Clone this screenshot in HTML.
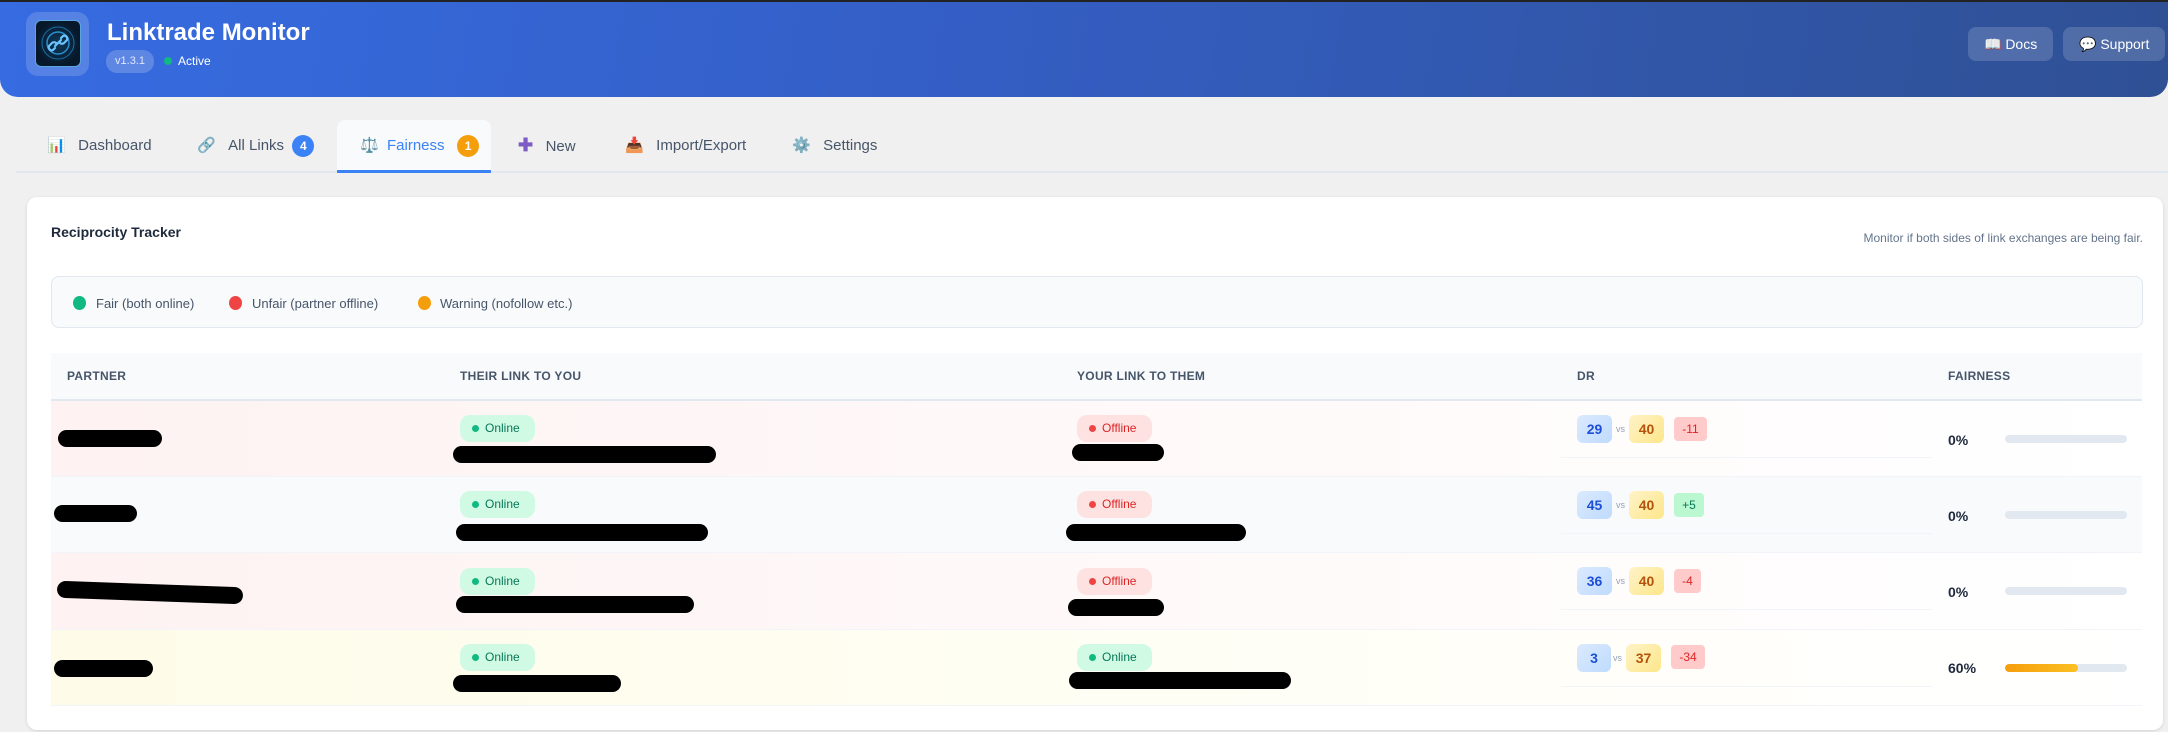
<!DOCTYPE html>
<html><head><meta charset="utf-8"><style>
*{box-sizing:border-box;margin:0;padding:0}
body{width:2168px;height:732px;background:#f0f0f0;font-family:"Liberation Sans",sans-serif;position:relative;overflow:hidden}
.a{position:absolute}
.hdr{left:0;top:0;width:2168px;height:97px;border-radius:0 0 18px 18px;border-top:2px solid #222;
background-image:linear-gradient(100deg,#2660e0 0%,#2452c0 45%,#1f438c 100%)}
.pat{left:0;top:2px;width:2168px;height:95px;border-radius:0 0 18px 18px;opacity:.07;
background-image:linear-gradient(#fff,#fff),linear-gradient(#fff,#fff);background-size:8px 1.5px,1.5px 8px;background-position:10px 14px,13.25px 10.75px;background-repeat:repeat}
.btn{top:27px;height:34px;border-radius:8px;background:rgba(255,255,255,.16);color:#fff;font-size:14px;line-height:34px;padding-left:16px}
.tab{top:146px;font-size:15px;color:#475569;transform:translateY(-50%);line-height:22px}
.badge{display:inline-block;width:22px;height:22px;border-radius:11px;color:#fff;font-size:12px;font-weight:bold;text-align:center;line-height:22px;vertical-align:middle}
.th{top:376px;font-size:12px;font-weight:bold;color:#475569;transform:translateY(-50%);letter-spacing:.3px}
.pill{height:27px;border-radius:10px;font-size:12px;line-height:27px;padding-left:25px;width:75px}
.pill:before{content:"";position:absolute;left:12px;top:10px;width:7px;height:7px;border-radius:50%}
.on{background:#d1fae5;color:#047857}.on:before{background:#10b981}
.off{background:#fee2e2;color:#dc2626}.off:before{background:#ef4444}
.blk{background:#000;border-radius:9px;height:17px}
.dr{width:35px;height:28px;border-radius:6px;font-size:14px;font-weight:bold;text-align:center;line-height:28px}
.b1{background:linear-gradient(135deg,#dbeafe,#bfdbfe);color:#1d4ed8}
.y1{background:linear-gradient(135deg,#fef3c7,#fde68a);color:#b45309}
.vs{font-size:9px;color:#94a3b8}
.df{height:24px;border-radius:4px;font-size:12px;text-align:center;line-height:24px}
.neg{background:#fecaca;color:#dc2626}.pos{background:#bbf7d0;color:#047857}
.pct{font-size:14px;font-weight:bold;color:#1e293b;transform:translateY(-50%)}
.bar{width:122px;height:8px;border-radius:4px;background:#e2e8f0;overflow:hidden}
</style></head><body>
<div class="a hdr"></div>
<div class="a pat"></div>
<div class="a" style="left:26px;top:12px;width:63px;height:64px;border-radius:12px;background:rgba(255,255,255,.16)"></div>
<div class="a" style="left:35px;top:20px;width:46px;height:47px;border-radius:6px;background:radial-gradient(circle,#0f3a5a 0%,#07182a 70%);border:1px solid #5aa7e0">
<svg width="44" height="45" viewBox="0 0 44 45"><circle cx="22" cy="22" r="16" fill="none" stroke="#1b6fa8" stroke-width="1"/><circle cx="22" cy="22" r="11" fill="none" stroke="#2a8fd0" stroke-width="1.5"/><g stroke="#6cc4ff" stroke-width="2.2" fill="none" stroke-linecap="round"><path d="M19 27l-2 2a3 3 0 0 1-4-4l3-3a3 3 0 0 1 4 0"/><path d="M25 17l2-2a3 3 0 0 1 4 4l-3 3a3 3 0 0 1-4 0"/><path d="M19 25l6-6"/></g></svg></div>
<div class="a" style="left:107px;top:19px;font-size:24px;font-weight:bold;color:#fff">Linktrade Monitor</div>
<div class="a" style="left:106px;top:50px;width:48px;height:23px;border-radius:11px;background:rgba(255,255,255,.2);color:#e0e7ff;font-size:11px;text-align:center;line-height:23px">v1.3.1</div>
<div class="a" style="left:164px;top:57px;width:8px;height:8px;border-radius:50%;background:#10b981"></div>
<div class="a" style="left:178px;top:54px;font-size:12px;color:#fff">Active</div>
<div class="a btn" style="left:1968px;width:85px">📖&nbsp;Docs</div>
<div class="a btn" style="left:2063px;width:102px">💬&nbsp;Support</div>

<div class="a" style="left:16px;top:171px;width:2152px;height:2px;background:#e2e8f0"></div>
<div class="a" style="left:337px;top:120px;width:154px;height:53px;border-radius:8px 8px 0 0;background:#f8fafc;border-bottom:3px solid #3b82f6"></div>
<div class="a tab" style="left:47px">📊&nbsp;&nbsp;&nbsp;Dashboard</div>
<div class="a tab" style="left:197px">🔗&nbsp;&nbsp;&nbsp;All Links&nbsp;&nbsp;<span class="badge" style="background:#3b82f6">4</span></div>
<div class="a tab" style="left:360px;color:#3b82f6">⚖️&nbsp;&nbsp;Fairness&nbsp;&nbsp;&nbsp;<span class="badge" style="background:#f59e0b">1</span></div>
<div class="a tab" style="left:518px"><span style="color:#7c5cc4;font-weight:bold;font-size:18px">✚</span>&nbsp;&nbsp;&nbsp;New</div>
<div class="a tab" style="left:625px">📥&nbsp;&nbsp;&nbsp;Import/Export</div>
<div class="a tab" style="left:792px">⚙️&nbsp;&nbsp;&nbsp;Settings</div>

<div class="a" style="left:27px;top:197px;width:2136px;height:533px;background:#fff;border-radius:10px;box-shadow:0 1px 3px rgba(0,0,0,.12)"></div>
<div class="a" style="left:51px;top:224px;font-size:14px;font-weight:bold;color:#1e293b">Reciprocity Tracker</div>
<div class="a" style="right:25px;top:231px;font-size:12px;color:#64748b">Monitor if both sides of link exchanges are being fair.</div>
<div class="a" style="left:51px;top:276px;width:2092px;height:52px;background:#f8fafc;border:1px solid #e2e8f0;border-radius:8px"></div>
<div class="a" style="left:73px;top:296px;width:13px;height:14px;border-radius:50%;background:#10b981"></div>
<div class="a" style="left:96px;top:296px;font-size:13px;color:#475569">Fair (both online)</div>
<div class="a" style="left:229px;top:296px;width:13px;height:14px;border-radius:50%;background:#ef4444"></div>
<div class="a" style="left:252px;top:296px;font-size:13px;color:#475569">Unfair (partner offline)</div>
<div class="a" style="left:418px;top:296px;width:13px;height:14px;border-radius:50%;background:#f59e0b"></div>
<div class="a" style="left:440px;top:296px;font-size:13px;color:#475569">Warning (nofollow etc.)</div>

<div class="a" style="left:51px;top:353px;width:2091px;height:48px;background:#f8fafc;border-bottom:2px solid #e2e8f0"></div>
<div class="a th" style="left:67px">PARTNER</div>
<div class="a th" style="left:460px">THEIR LINK TO YOU</div>
<div class="a th" style="left:1077px">YOUR LINK TO THEM</div>
<div class="a th" style="left:1577px">DR</div>
<div class="a th" style="left:1948px">FAIRNESS</div>

<div class="a" style="left:51px;top:401px;width:2091px;height:76px;background:linear-gradient(90deg,#fef2f2,#fffafa 60%,#fff);border-bottom:1px solid #f1f5f9"></div>
<div class="a" style="left:51px;top:477px;width:2091px;height:76px;background:#f8fafc;border-bottom:1px solid #f1f5f9"></div>
<div class="a" style="left:51px;top:553px;width:2091px;height:77px;background:linear-gradient(90deg,#fef2f2,#fffafa 60%,#fff);border-bottom:1px solid #f1f5f9"></div>
<div class="a" style="left:51px;top:630px;width:2091px;height:76px;background:linear-gradient(90deg,#fefce8,#fffef6 60%,#fff);border-bottom:1px solid #f1f5f9"></div>
<div class="a" style="left:1561px;top:457px;width:371px;height:1px;background:#f1f5f9"></div>
<div class="a" style="left:1561px;top:533px;width:371px;height:1px;background:#f1f5f9"></div>
<div class="a" style="left:1561px;top:609px;width:371px;height:1px;background:#f1f5f9"></div>
<div class="a" style="left:1561px;top:686px;width:371px;height:1px;background:#f1f5f9"></div>

<!-- row1 -->
<div class="a blk" style="left:58px;top:430px;width:104px"></div>
<div class="a pill on" style="left:460px;top:415px">Online</div>
<div class="a blk" style="left:453px;top:446px;width:263px"></div>
<div class="a pill off" style="left:1077px;top:415px">Offline</div>
<div class="a blk" style="left:1072px;top:444px;width:92px"></div>
<div class="a dr b1" style="left:1577px;top:415px">29</div><div class="a vs" style="left:1616px;top:424px">vs</div>
<div class="a dr y1" style="left:1629px;top:415px">40</div>
<div class="a df neg" style="left:1674px;top:417px;width:33px">-11</div>
<div class="a pct" style="left:1948px;top:440px">0%</div>
<div class="a bar" style="left:2005px;top:435px"></div>
<!-- row2 -->
<div class="a blk" style="left:54px;top:505px;width:83px"></div>
<div class="a pill on" style="left:460px;top:491px">Online</div>
<div class="a blk" style="left:456px;top:524px;width:252px"></div>
<div class="a pill off" style="left:1077px;top:491px">Offline</div>
<div class="a blk" style="left:1066px;top:524px;width:180px"></div>
<div class="a dr b1" style="left:1577px;top:491px">45</div><div class="a vs" style="left:1616px;top:500px">vs</div>
<div class="a dr y1" style="left:1629px;top:491px">40</div>
<div class="a df pos" style="left:1674px;top:493px;width:30px">+5</div>
<div class="a pct" style="left:1948px;top:516px">0%</div>
<div class="a bar" style="left:2005px;top:511px"></div>
<!-- row3 -->
<div class="a blk" style="left:57px;top:584px;width:186px;transform:rotate(2deg)"></div>
<div class="a pill on" style="left:460px;top:568px">Online</div>
<div class="a blk" style="left:456px;top:596px;width:238px"></div>
<div class="a pill off" style="left:1077px;top:568px">Offline</div>
<div class="a blk" style="left:1068px;top:599px;width:96px"></div>
<div class="a dr b1" style="left:1577px;top:567px">36</div><div class="a vs" style="left:1616px;top:576px">vs</div>
<div class="a dr y1" style="left:1629px;top:567px">40</div>
<div class="a df neg" style="left:1674px;top:569px;width:27px">-4</div>
<div class="a pct" style="left:1948px;top:592px">0%</div>
<div class="a bar" style="left:2005px;top:587px"></div>
<!-- row4 -->
<div class="a blk" style="left:54px;top:660px;width:99px"></div>
<div class="a pill on" style="left:460px;top:644px">Online</div>
<div class="a blk" style="left:453px;top:675px;width:168px"></div>
<div class="a pill on" style="left:1077px;top:644px">Online</div>
<div class="a blk" style="left:1069px;top:672px;width:222px"></div>
<div class="a dr b1" style="left:1577px;top:644px;width:34px">3</div><div class="a vs" style="left:1613px;top:653px">vs</div>
<div class="a dr y1" style="left:1626px;top:644px">37</div>
<div class="a df neg" style="left:1671px;top:645px;width:34px">-34</div>
<div class="a pct" style="left:1948px;top:668px">60%</div>
<div class="a bar" style="left:2005px;top:664px"><div style="width:60%;height:100%;border-radius:4px;background:linear-gradient(90deg,#f59e0b,#fbbf24)"></div></div>
</body></html>
